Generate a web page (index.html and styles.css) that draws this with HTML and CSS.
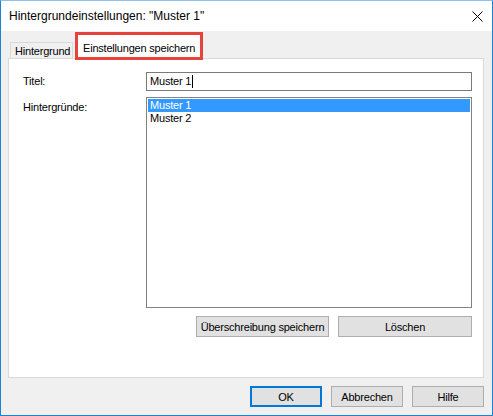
FILE: index.html
```html
<!DOCTYPE html>
<html>
<head>
  <title>Hintergrundeinstellungen</title>
  <link rel="stylesheet" href="styles.css">
</head>
<body>
  <div class="window">
    <div class="titlebar">
      <span class="title">Hintergrundeinstellungen: "Muster 1"</span>
      <svg class="close" width="11" height="11" viewBox="0 0 11 11">
        <path d="M0.5 0.5 L10.5 10.5 M10.5 0.5 L0.5 10.5" stroke="#000" stroke-width="1"/>
      </svg>
    </div>

    <div class="content">
      <div class="tabs">
        <div class="tab">Hintergrund</div>
        <div class="tab active">Einstellungen speichern</div>
      </div>

      <div class="panel">
        <div class="row">
          <label class="label">Titel:</label>
          <div class="input">Muster 1<span class="caret"></span></div>
        </div>
        <div class="row">
          <label class="label label-top">Hintergründe:</label>
          <div class="listbox">
            <div class="item selected">Muster 1</div>
            <div class="item">Muster 2</div>
          </div>
        </div>
        <div class="panel-buttons">
          <button class="btn btn-wide">Überschreibung speichern</button>
          <button class="btn btn-del">Löschen</button>
        </div>
      </div>

      <div class="footer">
        <button class="btn btn-small default">OK</button>
        <button class="btn btn-small">Abbrechen</button>
        <button class="btn btn-small">Hilfe</button>
      </div>
    </div>
  </div>
</body>
</html>
```

FILE: styles.css
```css
body {
  margin: 0;
  font-family: "Liberation Sans", Arial, sans-serif;
  font-size: 11px;
  letter-spacing: -0.2px;
  color: #000;
  background: #fff;
  white-space: nowrap;
}
.window {
  width: 493px;
  height: 416px;
  box-sizing: border-box;
  border: 1px solid #1883d7;
  border-top-color: #8cc2ec;
  background: #f0f0f0;
  display: flex;
  flex-direction: column;
}
.titlebar {
  height: 30px;
  flex: none;
  background: #fff;
  display: flex;
  align-items: center;
  justify-content: space-between;
  padding: 0 9px 0 8px;
}
.title {
  font-size: 12px;
  letter-spacing: 0;
}
.close {
  margin-top: 1px;
}
.content {
  flex: 1;
  padding: 0 8px 0 7px;
  display: flex;
  flex-direction: column;
}
.tabs {
  height: 27px;
  display: flex;
  align-items: flex-end;
  padding-left: 2px;
}
.tab {
  height: 16px;
  box-sizing: border-box;
  width: 63px;
  border: 1px solid #d9d9d9;
  border-bottom: none;
  background: #f0f0f0;
  padding: 2px 0 0 4px;
  line-height: 13px;
}
.tab.active {
  width: 128px;
  height: 28px;
  margin-left: 2px;
  margin-bottom: -2px;
  border: 3px solid #e8423c;
  background: #fff;
  padding: 7px 0 0 5px;
  position: relative;
  z-index: 1;
}
.panel {
  height: 320px;
  box-sizing: border-box;
  border: 1px solid #d9d9d9;
  background: #fff;
  padding: 13px 11px 0 14px;
  display: flex;
  flex-direction: column;
  gap: 6px;
}
.row {
  display: flex;
}
.label {
  width: 123px;
  flex: none;
  line-height: 19px;
}
.label-top {
  line-height: 21px;
}
.input {
  width: 326px;
  height: 19px;
  box-sizing: border-box;
  border: 1px solid #7a7a7a;
  padding: 0 3px;
  line-height: 17px;
  display: flex;
  align-items: center;
}
.caret {
  display: inline-block;
  width: 1px;
  height: 13px;
  background: #000;
  margin-left: 1px;
}
.listbox {
  width: 326px;
  height: 211px;
  box-sizing: border-box;
  border: 1px solid #828282;
  padding: 1px;
}
.item {
  height: 13px;
  line-height: 13px;
  padding-left: 2px;
}
.item.selected {
  background: #3399ff;
  color: #fff;
}
.panel-buttons {
  display: flex;
  justify-content: flex-end;
  gap: 9px;
  margin-top: 2px;
}
.btn {
  height: 21px;
  box-sizing: border-box;
  border: 1px solid #adadad;
  background: #e1e1e1;
  font-family: "Liberation Sans", Arial, sans-serif;
  font-size: 11px;
  letter-spacing: -0.2px;
  color: #000;
  padding: 0;
  white-space: nowrap;
}
.btn-wide {
  width: 133px;
}
.btn-del {
  width: 134px;
}
.footer {
  display: flex;
  justify-content: flex-end;
  gap: 9px;
  padding-top: 8px;
}
.btn-small {
  width: 72px;
}
.btn.default {
  border: 2px solid #0078d7;
}
```
